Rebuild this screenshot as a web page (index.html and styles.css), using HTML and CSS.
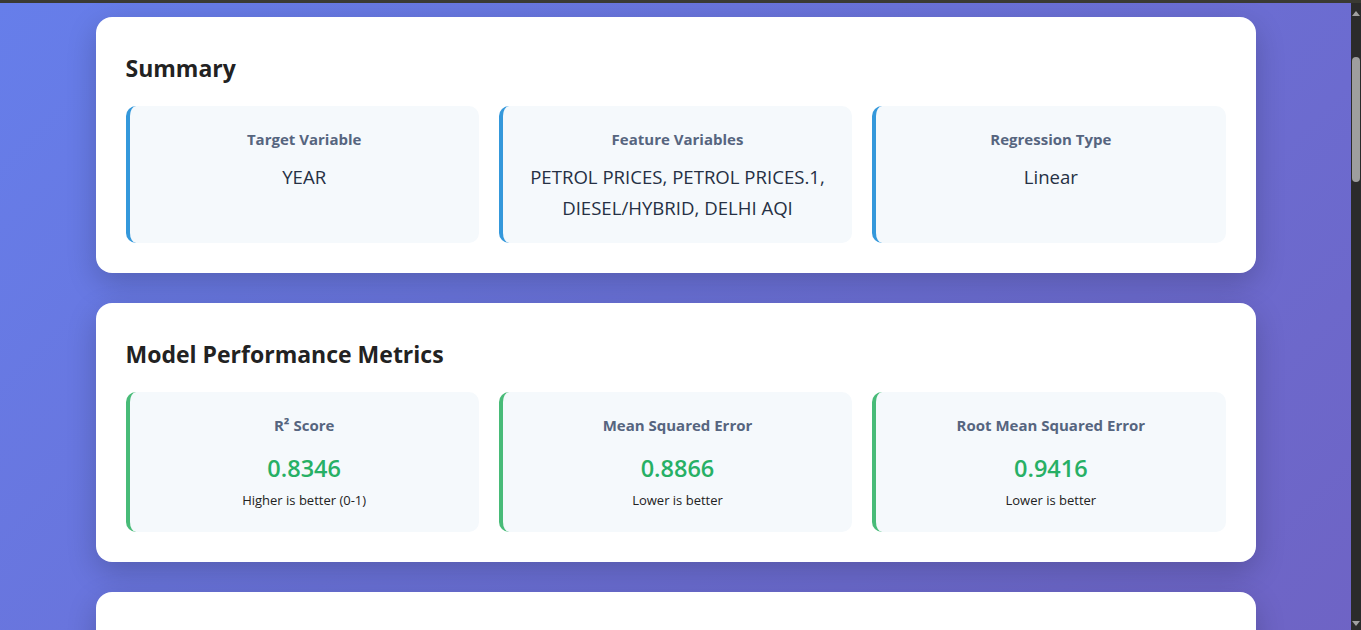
FILE: index.html
```html
<!DOCTYPE html>
<html lang="en">
<head>
<meta charset="utf-8">
<title>Regression Results</title>
<link rel="stylesheet" href="styles.css">
</head>
<body>
<div class="topbar"></div>
<div class="window">
  <div class="page">
    <main class="container">
      <section class="card">
        <h2 class="card-title">Summary</h2>
        <div class="grid">
          <div class="stat stat-blue">
            <div class="stat-label">Target Variable</div>
            <div class="stat-text">YEAR</div>
          </div>
          <div class="stat stat-blue">
            <div class="stat-label">Feature Variables</div>
            <div class="stat-text">PETROL PRICES, PETROL PRICES.1, DIESEL/HYBRID, DELHI AQI</div>
          </div>
          <div class="stat stat-blue">
            <div class="stat-label">Regression Type</div>
            <div class="stat-text">Linear</div>
          </div>
        </div>
      </section>

      <section class="card">
        <h2 class="card-title">Model Performance Metrics</h2>
        <div class="grid">
          <div class="stat stat-green">
            <div class="stat-label">R² Score</div>
            <div class="stat-value">0.8346</div>
            <div class="stat-note">Higher is better (0-1)</div>
          </div>
          <div class="stat stat-green">
            <div class="stat-label">Mean Squared Error</div>
            <div class="stat-value">0.8866</div>
            <div class="stat-note">Lower is better</div>
          </div>
          <div class="stat stat-green">
            <div class="stat-label">Root Mean Squared Error</div>
            <div class="stat-value">0.9416</div>
            <div class="stat-note">Lower is better</div>
          </div>
        </div>
      </section>

      <section class="card card-tall"></section>
    </main>
  </div>
  <div class="scrollbar" aria-hidden="true">
    <div class="sb-arrow sb-up"></div>
    <div class="sb-thumb"></div>
    <div class="sb-space"></div>
    <div class="sb-arrow sb-down"></div>
  </div>
</div>
</body>
</html>
```

FILE: styles.css
```css
html, body {
  margin: 0;
  height: 100%;
  overflow: hidden;
}

body {
  font-family: "Open Sans", "Noto Sans", sans-serif;
  color: #2d3748;
  background: #2b2b2b;
  display: flex;
  flex-direction: column;
}

.topbar {
  height: 3px;
  flex: none;
  background: #3a3a33;
}

.window {
  flex: 1;
  min-height: 0;
  display: flex;
}

.page {
  flex: 1;
  min-width: 0;
  overflow: hidden;
}

.container {
  background: linear-gradient(135deg, #667eea 0%, #764ba2 100%);
  padding: 14px 0 40px;
}

.card {
  width: 1160px;
  box-sizing: border-box;
  margin: 0 auto 30px;
  background: #ffffff;
  border-radius: 16px;
  padding: 30px;
  box-shadow: 0 10px 30px rgba(0, 0, 0, 0.2);
}

.card-tall {
  min-height: 1800px;
}

.card-title {
  margin: 0 0 17px;
  font-size: 23px;
  font-weight: 700;
  line-height: 42px;
  color: #222222;
}

.grid {
  display: grid;
  grid-template-columns: repeat(3, 1fr);
  gap: 20px;
}

.stat {
  background: #f5f9fc;
  border-radius: 10px;
  padding: 20px;
  text-align: center;
}

.stat-blue {
  border-left: 4px solid #3498db;
  min-height: 96px;
}

.stat-green {
  border-left: 4px solid #48bb78;
  padding-bottom: 22px;
}

.stat-label {
  font-size: 15px;
  font-weight: 700;
  color: #56657f;
  line-height: 26px;
  margin-bottom: 9px;
}

.stat-green .stat-label {
  margin-bottom: 12px;
}

.stat-text {
  font-size: 18.6px;
  font-weight: 500;
  color: #253044;
  line-height: 31px;
}

.stat-value {
  font-size: 23.5px;
  font-weight: 600;
  color: #27b065;
  line-height: 36px;
  margin-bottom: 4px;
}

.stat-note {
  font-size: 13px;
  color: #222222;
  line-height: 20px;
}

.scrollbar {
  flex: none;
  width: 10px;
  background: #2b2b2b;
  display: flex;
  flex-direction: column;
  align-items: center;
}

.sb-arrow {
  flex: none;
  width: 0;
  height: 0;
  border-left: 4px solid transparent;
  border-right: 4px solid transparent;
}

.sb-up {
  margin-top: 8px;
  border-bottom: 5px solid #a0a0a0;
}

.sb-down {
  margin-bottom: 4px;
  border-top: 5px solid #a0a0a0;
}

.sb-thumb {
  flex: none;
  width: 8px;
  height: 125px;
  margin-top: 41px;
  border-radius: 4px;
  background: #9e9e9e;
}

.sb-space {
  flex: 1;
}
```
